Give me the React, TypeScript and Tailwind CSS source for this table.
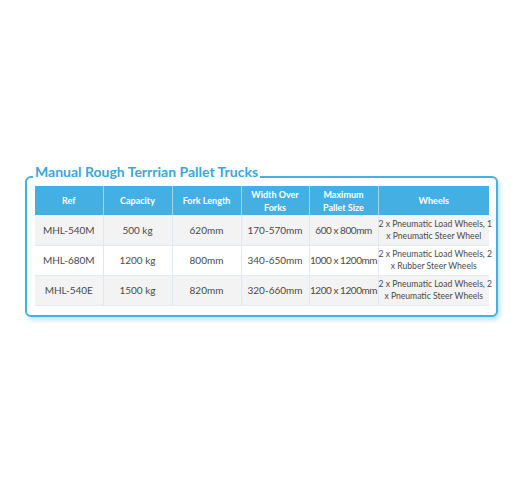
import React from "react";

const rows = [
  ["MHL-540M", "500 kg", "620mm", "170-570mm", "600 x 800mm", "2 x Pneumatic Load Wheels, 1", "x Pneumatic Steer Wheel"],
  ["MHL-680M", "1200 kg", "800mm", "340-650mm", "1000 x 1200mm", "2 x Pneumatic Load Wheels, 2", "x Rubber Steer Wheels"],
  ["MHL-540E", "1500 kg", "820mm", "320-660mm", "1200 x 1200mm", "2 x Pneumatic Load Wheels, 2", "x Pneumatic Steer Wheels"],
];

const heads = ["Ref", "Capacity", "Fork Length", "Width Over Forks", "Maximum Pallet Size", "Wheels"];

export default function App() {
  return (
    <div className="w-[527px] h-[492px] bg-white pt-[176px] pl-[25px] font-['Lato','Open_Sans',sans-serif]">
      <div className="relative w-[473px] rounded-[6px] border-2 border-[#45b0e2] bg-white pt-[8px] pb-[9px] pl-[8px] pr-[7px] shadow-[2px_3px_4px_rgba(69,176,226,0.35)]">
        <div className="absolute left-[6px] -top-[15px] bg-white px-[2px] text-[14px] leading-[18px] font-bold text-[#38a8dc]">
          Manual Rough Terrrian Pallet Trucks
        </div>
        <table className="table-fixed border-collapse w-[454px]">
          <colgroup>
            <col className="w-[68px]" />
            <col className="w-[69px]" />
            <col className="w-[69px]" />
            <col className="w-[68px]" />
            <col className="w-[69px]" />
            <col className="w-[111px]" />
          </colgroup>
          <thead>
            <tr className="h-[29px] bg-[#43afe2]">
              {heads.map((h, i) => (
                <th
                  key={i}
                  className={`px-1 text-center align-middle text-[9px] leading-[13px] font-bold text-white ${i > 0 ? "border-l border-[#9dd6f1]" : ""}`}
                >
                  {h}
                </th>
              ))}
            </tr>
          </thead>
          <tbody>
            {rows.map((r, ri) => (
              <tr
                key={ri}
                className={`h-[30px] border-b border-[#e3eaf0] ${ri % 2 === 0 ? "bg-[#f3f3f3]" : "bg-white"}`}
              >
                {r.slice(0, 5).map((c, ci) => (
                  <td
                    key={ci}
                    className={`whitespace-nowrap px-0 text-center align-middle text-[10px] leading-[14px] text-[#4a4a4a] ${ci > 0 ? "border-l border-[#dfe8ef]" : ""} ${ci === 4 ? "tracking-[-0.45px]" : ""}`}
                  >
                    {c}
                  </td>
                ))}
                <td className="whitespace-nowrap px-0 text-center align-middle text-[8.6px] leading-[12px] text-[#4a4a4a] border-l border-[#dfe8ef]">
                  {r[5]}
                  <br />
                  {r[6]}
                </td>
              </tr>
            ))}
          </tbody>
        </table>
      </div>
    </div>
  );
}
